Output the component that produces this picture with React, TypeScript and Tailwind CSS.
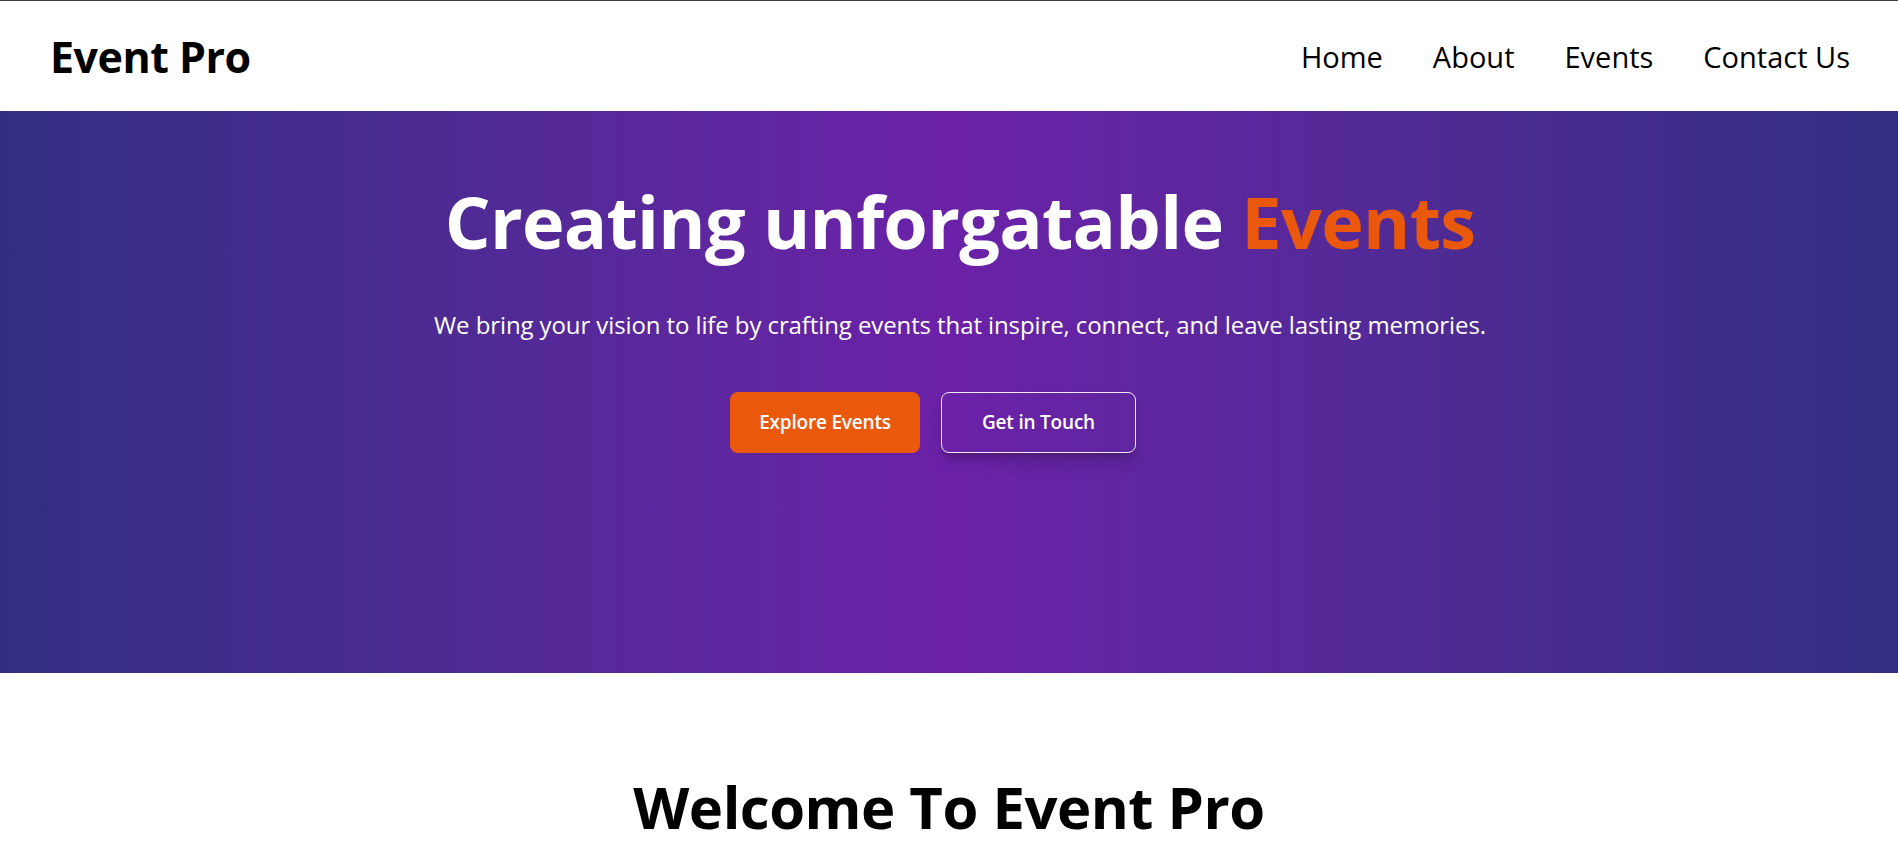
import React from "react";

export default function App() {
  const font = { fontFamily: '"Open Sans", "Noto Sans", sans-serif' };
  return (
    <div className="min-h-screen bg-white text-black" style={font}>
      <div className="h-px bg-[#3c3c3c]" />
      <header className="flex h-[110px] items-center justify-between bg-white pl-[50px] pr-12 pt-[2px]">
        <div className="text-[43px] font-bold tracking-[-0.5px] text-black">Event Pro</div>
        <nav className="flex items-center gap-[50px] text-[29px] font-medium text-black">
          <a href="#">Home</a>
          <a href="#">About</a>
          <a href="#">Events</a>
          <a href="#">Contact Us</a>
        </nav>
      </header>
      <section className="flex h-[562px] flex-col items-center bg-gradient-to-r from-[#312e81] via-[#6b21a8] to-[#312e81] pl-[22px] pt-[74px] text-white">
        <h1 className="text-[72px] font-bold leading-none tracking-[-0.7px]">
          Creating unforgatable <span className="text-[#ea580c]">Events</span>
        </h1>
        <p className="mt-[53px] text-[24px] leading-[30px] tracking-[-0.1px]">
          We bring your vision to life by crafting events that inspire, connect, and leave lasting memories.
        </p>
        <div className="mr-[54px] mt-[52px] flex gap-[21px]">
          <button className="flex h-[61px] w-[190px] items-center justify-center rounded-lg bg-[#ea580c] text-[19px] font-semibold tracking-[-0.2px] text-white">
            Explore Events
          </button>
          <button className="flex h-[61px] w-[195px] items-center justify-center rounded-lg border border-white/90 text-[19px] font-semibold tracking-[-0.2px] text-white shadow-lg shadow-black/20">
            Get in Touch
          </button>
        </div>
      </section>
      <section className="flex flex-col items-center pt-[105px]">
        <h2 className="text-[58px] font-bold leading-none tracking-[-0.5px] text-black">Welcome To Event Pro</h2>
      </section>
    </div>
  );
}
